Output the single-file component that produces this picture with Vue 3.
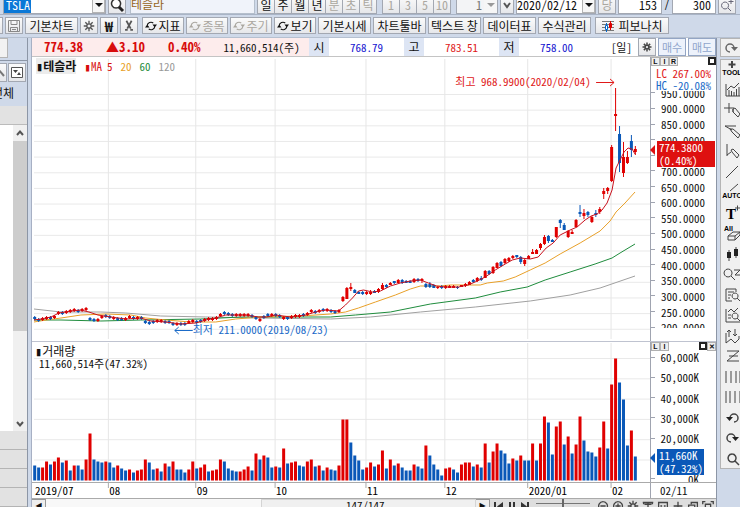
<script setup>
// Daily volume, one entry per bar: direction (r = up, b = down) and bar height
const volumeText =
  'b15 b13 r13 r19 b16 r19 r23 b18 r20 b10 r15 b15 b11 r21 r47 b21 b19 b18 r19 b18 ' +
  'b13 r15 b12 b10 r11 b8 r10 r11 r21 b18 b11 r12 b9 r17 b14 r19 b11 b11 b8 r11 ' +
  'r19 b12 r13 r16 b9 r10 r11 r21 b19 b12 b10 b9 r9 r11 r14 b10 r27 b21 r25 b23 ' +
  'b13 r14 b13 r32 b17 r18 r19 b15 b14 r19 r21 b14 r15 b10 r13 b11 b10 r15 r61 r61 ' +
  'b38 b25 b20 b11 r13 r18 b14 r16 r30 b12 r21 b15 r17 b13 b10 b10 r16 b14 b12 r35 ' +
  'b25 b16 b11 b5 r12 r13 b11 b8 r16 r18 r18 b14 r16 b13 r37 b18 r29 r37 b30 b27 ' +
  'b17 r22 b20 r25 b20 b20 r37 b20 r37 r64 b58 b26 r54 r59 b36 r44 b27 r36 r64 b40 ' +
  'b29 b28 b24 r33 r59 b32 r96 r122 b98 b81 b35 r50 b24'

// Quiet stretch: direction and body middle
const quietText =
  'b318 b320 r319 r318 b318 r317 r313 b313 r312 r311 r310 b311 r310 r309 b319 b320 r320 r317 b316 b317 ' +
  'r318 b319 b319 r319 r317 b318 r318 b318 b322 b323 b322 r321 r321 b322 b322 b324 r324 b324 b324 r322 ' +
  'r321 b322 b321 r320 r319 r319 r318 r315 b313 b314 b315 r315 r315 r315 r315 b316 b318 r320 b317 b315 ' +
  'r315 b315 b316 r318 b318 r317 r316 r316 b315 r314 r311 b312 r311 b310 r310 b311 b312 r311'

// Active stretch: direction, body top, body bottom, wick top, wick bottom
const activeText =
  'r,297,301,296,302|r,288,299,287,299|r,287,289,283,291|b,290,293,289,293|b,292,294,291,294|b,292,294,291,295|' +
  'r,292,294,291,295|r,292,294,290,295|b,291,293,290,293|r,289,292,288,293|r,285,289,283,290|b,285,287,284,288|' +
  'r,283,285,282,285|b,281,283,281,284|r,280,283,279,283|b,280,283,279,284|b,281,283,280,283|b,281,283,280,283|' +
  'r,279,282,278,283|b,279,281,278,282|r,279,281,278,283|b,284,287,283,288|b,284,287,282,288|b,285,288,284,288|' +
  'r,287,288,286,289|b,286,288,285,289|r,286,288,285,289|r,286,288,285,288|r,286,288,285,288|b,287,288,286,289|' +
  'r,285,287,285,287|r,284,286,283,287|r,282,285,281,285|b,280,282,279,283|r,278,281,277,282|b,278,280,276,281|' +
  'r,271,278,270,278|b,271,274,270,275|r,267,273,266,274|r,263,268,262,268|b,262,266,261,267|r,259,263,258,264|' +
  'r,258,261,257,262|r,256,258,255,259|b,255,257,255,258|b,257,262,256,264|r,260,264,259,266|r,256,259,255,259|' +
  'r,252,254,249,254|r,250,254,249,254|r,244,248,243,250|r,237,244,235,245|b,236,241,235,243|b,240,242,239,242|' +
  'r,227,237,227,238|b,220,223,219,228|b,225,230,223,230|r,231,237,230,238|r,232,234,230,234|r,220,227,219,227|' +
  'b,212,214,205,217|r,213,216,209,219|b,212,215,211,217|r,217,222,216,223|b,213,215,210,217|r,209,212,207,214|' +
  'r,191,194,188,199|r,188,191,187,194|r,147,181,145,182|r,114,116,88,131|b,134,163,126,172|r,157,173,142,177|' +
  'r,157,163,151,164|b,141,150,135,157|r,149,152,146,155'

const barX = (i) => 33.7 + i * 3.958

const volumes = volumeText.split(' ').map((t, i) => ({ dir: t[0], x: barX(i), h: Number(t.slice(1)) }))
const quiet = quietText.split(' ').map((t) => {
  const y = Number(t.slice(1))
  return { dir: t[0], top: y - 1, bottom: y + 1, high: y - 2, low: y + 2 }
})
const active = activeText.split('|').map((t) => {
  const [dir, ...n] = t.split(',')
  const [top, bottom, high, low] = n.map(Number)
  return { dir, top, bottom, high, low }
})
const candles = [...quiet, ...active].map((c, i) => ({ ...c, x: barX(i) }))

const averages = [
  { name: 'ma120', pts: '33,309 60,312 100,312 125,313 160,316 205,317 260,318 330,319 370,317 420,312 475,307 530,301 570,295 600,288 635,276' },
  { name: 'ma60', pts: '33,320 60,320 100,321 140,320 200,319 240,317 300,317 330,317 355,315 390,312 430,304 475,298 500,292 527,287 545,280 570,272 595,264 612,258 620,253 635,244' },
  { name: 'ma20', pts: '33,322 45,320 60,318 80,315 105,314 130,315 145,318 165,320 190,322 215,322 235,319 260,317 300,316 330,314 345,312 358,308 375,302 395,295 410,289 420,286 440,286 450,285 480,285 487,283 503,281 515,277 530,270 545,263 560,254 580,243 600,231 610,221 616,212 625,203 635,192' },
  { name: 'ma5', pts: '33,320 40,319 50,317 58,313 70,311 80,310 88,312 97,315 110,317 125,319 140,318 150,321 165,322 180,324 195,323 205,320 215,318 225,315 245,315 258,317 266,317 275,315 290,317 305,315 315,312 325,310 338,311 345,305 352,298 358,291 363,290 372,292 380,291 390,286 400,283 410,281 420,280 428,283 436,286 445,287 458,287 468,285 477,281 485,277 495,270 505,264 512,260 520,258 530,259 538,257 546,248 553,243 560,235 570,230 577,227 585,220 591,216 597,214 602,210 607,203 612,190 616,168 620,160 624,152 628,148 632,149 635,154' },
]

const months = [
  { x: 107.5, label: '08' }, { x: 195, label: '09' }, { x: 274.5, label: '10' },
  { x: 365.5, label: '11' }, { x: 444.5, label: '12' }, { x: 527.5, label: '2020/01' }, { x: 611, label: '02' },
]
const priceGrid = Array.from({ length: 16 }, (_, i) => 94.5 + i * 15.65)
const volumeGrid = Array.from({ length: 6 }, (_, i) => 358.5 + i * 20.3)
// The row behind the current-value tag carries a tick only
const prices = Array.from({ length: 16 }, (_, i) => (i === 4 ? '' : (950 - i * 50).toFixed(4)))
const volumeLabels = ['60,000K', '50,000K', '40,000K', '30,000K', '20,000K', '', '0K']

const periods = [
  { t: '일', on: true }, { t: '주', on: true }, { t: '월', on: true }, { t: '년', on: true },
  { t: '분' }, { t: '초' }, { t: '틱' },
]
const syncButtons = [{ t: '지표', on: true }, { t: '종목' }, { t: '주기' }, { t: '보기', on: true }]
const wideButtons = ['기본시세', '차트툴바', '텍스트 창', '데이터표', '수식관리']

const gear = 'M8 5.5a2.5 2.5 0 1 0 0 5a2.5 2.5 0 1 0 0-5M8 2v3M8 11v3M2 8h3M11 8h3M3.8 3.8l2 2M10.2 10.2l2 2M3.8 12.2l2-2M10.2 5.8l2-2'
const sync = 'M3 7a5 4.500 0 0 1 8-3M13 9a5 4.500 0 0 1-8 3'
const syncHeads = 'M10 6h6l-3 4zM6 10H0l3-4z'

// Drawing tools on the right rail, 20 × 18 boxes
const tools = [
  { n: 'TOOL', d: 'M10 1v7M6.500 4.500h7', w: 2, t: 'TOOL', ty: 15 },
  { n: '차트', d: 'M4 3v12h14M5 9l4-4 3 2 5-5M7 15V9M9.500 15v-5M12 15v-4M14.500 15V8M17 15V6' },
  { n: '십자선', d: 'M2 7h10M7 2v10M11 8l2-1 5 6-2 3-5-5zM11 8v3' },
  { n: '수평선', d: 'M3 4h11M8 7l3 0 7 6-2 3-6-6zM3 4l7 4' },
  { n: '수직선', d: 'M5 2v12M9 8l2-1 6 6-2 3-5-6zM5 13l4-3' },
  { n: '추세선', d: 'M4 15L16 3' },
  { n: '자동 추세선', d: 'M8 8L16 1', t: 'AUTO', ty: 15 },
  { n: '텍스트', d: 'M13 4h5M15.500 1.500v5', serif: 'T' },
  { n: '전체 삭제', d: 'M6 12l5-4h7v3l-5 5H6zM6 12h7v4M13 12l5-4', all: 'All' },
  { n: '봉 차트', d: 'M7 5v11M14 2v11', f: 'M5 7h4v6H5zM12 4h4v7h-4z' },
  { n: '확대 목록', d: 'M6 4a4 4 0 1 0 .1 0M9 11l4 4M12 5h6l-5 5h5' },
  { n: '문서 조회', d: 'M14 6V3H4v12h6M6 6h6M6 9h3M6 12h2M13 7a3 3 0 1 0 .1 0M15 12l4 4' },
  { n: '차트 조회', d: 'M4 3v13h14M6 6l3-3 3 3 4-4M6 9h3M6 12h3M13 7a3 3 0 1 0 .1 0M15 12l3 3' },
  { n: '신호', d: 'M4 6v10l5-4 4 4 4-4V9M7 3v7M5 5l2-2 2 2M13 2v7M11 7l2 2 2-2' },
  { n: '패턴', d: 'M5 4h12L5 14h12M7 9h9' },
  { n: '시간대', d: 'M4 3v12M9 3v12M14 3v12M18 3v12' },
  { n: '피보나치 시간대', d: 'M4 3v12M8 3v12M13 3v12M18 3v12' },
  { n: '되돌리기', d: 'M8 9a4 4 0 1 1 4 4', w: 1.5, f: 'M4 8h7l-3.500 4z' },
  { n: '다시 실행', d: 'M13 9a4 4 0 1 0-4 4', w: 1.5, f: 'M10 8h7l-3.500 4z' },
  { n: '돋보기', d: 'M10 4a4 4 0 1 0 .1 0M13 11l4 4', w: 1.5 },
]
const footIcons = [
  { n: '축소', d: 'M8 3a5 5 0 1 0 .1 0M5 8h6' },
  { n: '확대', d: 'M8 3a5 5 0 1 0 .1 0M5 8h6M8 5v6' },
  { n: '설정', d: gear },
  { n: '도구', d: 'M2 4h12M4 6h8M8 4v8M3 3v3M13 3v3' },
  { n: '창', d: 'M3 4h10v8H3zM5 8h2M9 8h2' },
  { n: '이동', d: 'M8 3v10M3 8h10' },
  { n: '겹치기', d: 'M3 7h7v6H3zM6 6V4h7v6h-3' },
  { n: '전체 화면', d: 'M5 6h6v5H5zM2 6V3h3M11 3h3v3' },
]
</script>

<template>
  <div class="app">
    <header class="row symbol-row">
      <div class="combo symbol">
        <input class="field" aria-label="종목코드" value="TSLA" />
        <button class="arrow" aria-label="종목 목록"><i class="down"></i></button>
      </div>
      <button class="btn icon" aria-label="종목 검색">
        <svg viewBox="0 0 16 16" width="16" height="16"><path d="M7 2a4.500 4.500 0 1 0 .1 0" fill="#fff" stroke="#333" stroke-width="1.500" /><path d="M10 10l4 4" stroke="#222" stroke-width="3" /></svg>
      </button>
      <div class="stock-name">테슬라</div>
      <div class="segments">
        <button v-for="p in periods" :key="p.t" class="btn seg" :class="{ off: !p.on }">{{ p.t }}</button>
      </div>
      <div class="segments counts">
        <button v-for="n in [1, 3, 5, 10]" :key="n" class="btn seg off">{{ n }}</button>
      </div>
      <div class="combo count">
        <input class="field muted" aria-label="간격" value="1" />
        <button class="arrow plain" aria-label="간격 선택"><i class="down grey"></i></button>
      </div>
      <button class="btn chev" aria-label="더 보기"><svg viewBox="0 0 10 10" width="10" height="10"><path d="M2 3l3 4 3-4" fill="none" stroke="#555" stroke-width="2" /></svg></button>
      <div class="combo date">
        <input class="field" aria-label="날짜" value="2020/02/12" />
        <button class="arrow" aria-label="날짜 선택"><i class="down"></i></button>
      </div>
      <button class="btn icon off">당</button>
      <input class="field box" aria-label="표시 개수" value="153" />
      <span class="slash">/</span>
      <input class="field box" aria-label="전체 개수" value="300" />
      <button class="btn icon" aria-label="확대">
        <svg viewBox="0 0 16 16" width="16" height="16" fill="none" stroke="#667"><path d="M6 5a3.500 3.500 0 1 0 .1 0M9 11l3 3M12 2v5M9.500 4.500h5" /></svg>
      </button>
    </header>

    <nav class="row tool-row">
      <button class="btn edge" aria-label="메뉴"></button>
      <button class="btn icon" aria-label="저장">
        <svg viewBox="0 0 16 16" width="16" height="16" fill="none" stroke="#888"><path d="M2.500 2.500h11v11h-11zM5 2.500v4h6v-4M4.500 13.500v-4h7v4M6 11.500h4" /></svg>
      </button>
      <button class="btn wide">기본차트</button>
      <button class="btn icon" aria-label="설정"><svg viewBox="0 0 16 16" width="14" height="14" fill="none" stroke="#555" stroke-width="1.500"><path :d="gear" /></svg></button>
      <button class="btn icon won">₩</button>
      <button class="btn icon" aria-label="자르기">
        <svg viewBox="0 0 16 16" width="14" height="14" fill="none" stroke="#555" stroke-width="2"><path d="M5 2l5 9M11 2L6 11" /><path d="M5 11.500v2M11 11.500v2" stroke-width="3" /></svg>
      </button>
      <div class="sync-group">
        <button v-for="b in syncButtons" :key="b.t" class="btn sync" :class="{ off: !b.on }">
          <svg viewBox="0 0 16 16" width="12" height="12"><path :d="sync" fill="none" stroke="currentColor" stroke-width="1.500" /><path :d="syncHeads" fill="currentColor" /></svg>{{ b.t }}
        </button>
      </div>
      <button v-for="b in wideButtons" :key="b" class="btn wide">{{ b }}</button>
      <button class="btn fibo">
        <svg viewBox="0 0 14 12" width="14" height="12"><path d="M1 1.500h12M1 4.500h12M1 7.500h12M1 10.500h12" stroke="#777" /><path d="M5.500 3v9" stroke="#06c" /><path d="M9.500 1v9" stroke="#d00" /><path d="M4.500 5.500h2v4h-2z" fill="#fff" stroke="#06c" /><path d="M8.500 3.500h2v4h-2z" fill="#d00" stroke="#d00" /></svg>피보나치
      </button>
    </nav>

    <div class="body">
      <aside class="side">
        <div class="side-tab"></div>
        <div class="side-head">
          <div class="side-buttons">
            <button class="btn side-find" aria-label="찾기"><svg viewBox="0 0 8 16" width="8" height="16"><path d="M0 5l5 6" stroke="#777" stroke-width="2" /></svg></button>
            <button class="btn side-view" aria-label="보기 변경"><svg viewBox="0 0 14 14" width="14" height="14"><path d="M1.500 1.500h11v10h-11z" fill="#fff" stroke="#555" /><path d="M3 4h5L5.500 7zM7 9h4L9 6z" fill="#444" /></svg></button>
          </div>
          <div class="side-all"><span>전체</span></div>
        </div>
        <div class="side-band"></div>
        <div class="side-list">
          <div class="scroll">
            <svg viewBox="0 0 14 16" width="14" height="16"><path d="M4 10l3-3.500 3 3.500" fill="none" stroke="#555" stroke-width="2" /></svg>
            <div class="thumb"></div>
            <svg viewBox="0 0 14 16" width="14" height="16"><path d="M4 7l3 3.500 3-3.500" fill="none" stroke="#555" stroke-width="2" /></svg>
          </div>
        </div>
        <div v-for="n in 4" :key="n" class="side-row"></div>
      </aside>

      <main class="chart">
        <section class="quote">
          <div class="now">
            <b>774.38</b><b>▲3.10</b><b>0.40%</b><span>11,660,514(주)</span>
          </div>
          <span class="lab">시</span><span class="val blue">768.79</span>
          <span class="lab">고</span><span class="val red">783.51</span>
          <span class="lab">저</span><span class="val blue">758.00</span>
          <span class="day">[일]</span>
          <button class="btn icon" aria-label="시세 설정"><svg viewBox="0 0 16 16" width="12" height="12" fill="none" stroke="#444" stroke-width="2"><path :d="gear" /></svg></button>
          <button class="btn trade">매수</button>
          <button class="btn trade">매도</button>
        </section>

        <section class="pane">
          <div class="plot">
            <svg class="price-svg" viewBox="31 57 619 284" preserveAspectRatio="none">
              <path v-for="y in priceGrid" :key="y" :d="`M33 ${y}H650`" stroke="#e9e9e9" />
              <path v-for="m in months" :key="m.x" :d="`M${m.x} 59V339`" stroke="#e6e6e6" />
              <polyline v-for="a in averages.slice(0, 3)" :key="a.name" :points="a.pts" :class="a.name" class="avg" />
              <g v-for="c in candles" :key="c.x" :class="c.dir">
                <rect :x="c.x - 0.5" :y="c.high" width="1" :height="c.low - c.high" />
                <rect :x="c.x - 1.5" :y="c.top" width="3" :height="c.bottom - c.top" />
              </g>
              <polyline :points="averages[3].pts" class="avg ma5" />
              <text x="455" y="86" fill="#e01818">최고 968.9900(2020/02/04)</text>
              <path d="M596 82.500h18M610 79l4 3.500-4 3.500" fill="none" stroke="#e01818" />
              <text x="192" y="334" fill="#1a6ac8">최저 211.0000(2019/08/23)</text>
              <path d="M192 330.500h-18M178 327l-4 3.500 4 3.500" fill="none" stroke="#1a6ac8" />
            </svg>
            <div class="legend">
              <b class="title">▮테슬라</b>
              <span class="t5">▮MA</span><span class="t5">5</span><span class="t20">20</span><span class="t60">60</span><span class="t120">120</span>
            </div>
          </div>
          <div class="axis">
            <div class="axis-head"><i>L</i><i>I</i><i>R</i><i class="sq"></i></div>
            <div class="rate up">LC 267.00%</div>
            <div class="rate dn">HC -20.08%</div>
            <div class="clip price-clip"><ul class="ticks prices"><li v-for="(p, i) in prices" :key="i">{{ p }}</li></ul></div>
            <div class="tag price-tag">774.3800<br />(0.40%)</div>
          </div>
        </section>

        <section class="pane volume">
          <div class="plot">
            <svg class="volume-svg" viewBox="31 342 619 140" preserveAspectRatio="none">
              <path v-for="y in volumeGrid" :key="y" :d="`M33 ${y}H650`" stroke="#e9e9e9" />
              <path v-for="m in months" :key="m.x" :d="`M${m.x} 343V482`" stroke="#e6e6e6" />
              <rect v-for="v in volumes" :key="v.x" :class="v.dir" :x="v.x - 1.5" :y="480.5 - v.h" width="3" :height="v.h" />
            </svg>
            <div class="legend stacked"><span class="name">▮거래량</span><span>11,660,514주(47.32%)</span></div>
          </div>
          <div class="axis">
            <div class="axis-head"><i>L</i><i>I</i><i class="sq"></i><i class="x">✕</i></div>
            <div class="clip"><ul class="ticks vols"><li v-for="(v, i) in volumeLabels" :key="i">{{ v }}</li></ul></div>
            <div class="tag volume-tag">11,660K<br />(47.32%)</div>
          </div>
        </section>

        <section class="pane dates">
          <div class="plot">
            <svg class="date-svg" viewBox="31 482 619 15" preserveAspectRatio="none">
              <text x="34" y="494">2019/07</text>
              <g v-for="m in months" :key="m.x">
                <path :d="`M${m.x} 482v5`" stroke="#aaa" />
                <text :x="m.x + 1" y="494">{{ m.label }}</text>
              </g>
            </svg>
          </div>
          <div class="axis last-date">02/11</div>
        </section>

        <footer class="foot">
          <button class="foot-btn" aria-label="왼쪽으로">◀</button>
          <div class="track"><div class="handle"></div><span>147/147</span></div>
          <button class="foot-btn" aria-label="오른쪽으로">▶</button>
          <svg viewBox="0 0 40 14" width="40" height="14" fill="#333"><path d="M4 3h2v9H4zM13 3v9L7 7.500zM19 3h2v9h-2zM23 3h2v9h-2zM31 3v9l6-4.500zM37 3h2v9h-2z" /></svg>
          <input class="range" type="range" aria-label="확대 비율" />
          <button v-for="f in footIcons" :key="f.n" class="foot-icon" :aria-label="f.n">
            <svg viewBox="0 0 16 16" width="14" height="14" fill="none" stroke="#444" stroke-width="1.500"><path :d="f.d" /></svg>
          </button>
        </footer>
      </main>

      <aside class="rail">
        <button class="rail-top" aria-label="새로 고침"><svg viewBox="0 0 20 18" width="20" height="18"><path d="M13 9a4 4 0 1 0-4 4" fill="none" stroke="#666" stroke-width="1.500" /><path d="M10 8h7l-3.500 4z" fill="#666" /></svg></button>
        <div class="rail-list">
          <button v-for="t in tools" :key="t.n" class="tool" :aria-label="t.n">
            <svg viewBox="0 0 20 18" width="20" height="18">
              <path :d="t.d" fill="none" stroke="#444" :stroke-width="t.w || 1" />
              <path v-if="t.f" :d="t.f" fill="#222" />
              <text v-if="t.t" x="10" :y="t.ty" class="tiny" text-anchor="middle">{{ t.t }}</text>
              <text v-if="t.serif" x="4" y="15" class="serif">{{ t.serif }}</text>
              <text v-if="t.all" x="2" y="7" class="tiny">{{ t.all }}</text>
            </svg>
          </button>
        </div>
      </aside>
    </div>
  </div>
</template>

<style>
body {
  margin: 0;
  background: #cfd9e9;
}
</style>

<style scoped>
.app {
  --mono: "Noto Sans Mono CJK KR", "Noto Sans CJK KR", "Liberation Mono", monospace;
  height: 100vh;
  overflow: hidden;
  display: flex;
  flex-direction: column;
  background: #cfd9e9;
  color: #111;
  font: 12px/16px "Noto Sans CJK KR", sans-serif;
}
.app * { box-sizing: border-box; }
svg { display: block; flex: none; }
button, input { font: inherit; color: inherit; margin: 0; padding: 0; }
.row { display: flex; flex: none; white-space: nowrap; }
.btn {
  flex: none;
  display: flex;
  align-items: center;
  justify-content: center;
  border: 1px solid #a3a8b2;
  background: linear-gradient(#fbfbfb, #e6e7ea);
  overflow: hidden;
}
.off { color: #aaa7a0; }
.icon { width: 18px; }

.symbol-row {
  height: 15px;
  align-items: flex-end;
  overflow: hidden;
  gap: 2px;
  padding-left: 3px;
  border-bottom: 1px solid #a9b4c6;
}
.symbol-row > * { height: 19px; flex: none; }
.combo { display: flex; border: 1px solid #a3a8b2; background: #fff; }
.field { min-width: 0; width: 100%; border: 0; outline: 0; background: #fff; font-family: var(--mono); }
.arrow { flex: none; width: 13px; border: 1px solid #b4b4b4; background: #f6f6f6; display: flex; align-items: center; justify-content: center; }
.arrow.plain { border: 0; }
.down { border: 4px solid transparent; border-top-color: #111; border-bottom: 0; }
.down.grey { border-top-color: #999; }
.symbol { width: 103px; }
.symbol .field { flex: none; width: 27px; margin-right: auto; background: #0a78d7; color: #fff; padding-left: 2px; }
.stock-name { width: 125px; margin-left: 2px; border: 1px solid #b5bfcc; background: #f0f3fa; color: #956320; font-size: 12px; }
.segments { display: flex; }
.seg { width: 18px; margin-right: -1px; }
.counts { margin-left: 4px; }
.counts .seg { width: 18px; font-family: var(--mono); }
.count { width: 42px; margin-left: 4px; }
.muted { text-align: right; color: #777; background: #f3f4f6; padding-right: 2px; }
.chev { width: 14px; }
.date { width: 80px; }
.box { width: 44px; border: 1px solid #a3a8b2; text-align: right; padding-right: 4px; }
.slash { width: 6px; text-align: center; }

.tool-row { gap: 2px; padding: 2px 0 3px; height: 23px; border-bottom: 1px solid #b5c0d0; }
.edge { width: 3px; border-left: 0; }
.wide { width: 53px; }
.won { font-weight: 700; font-size: 14px; }
.sync-group { display: flex; gap: 2px; margin-left: 2px; }
.sync { width: 42px; gap: 1px; }
.fibo { width: 74px; gap: 3px; margin-left: 2px; }

.body { flex: 1; min-height: 0; display: flex; }
.side { width: 28px; flex: none; display: flex; flex-direction: column; border-right: 1px solid #8c96a6; margin-right: 3px; }
.side-tab { width: 8px; height: 20px; border: 1px solid #b4b4b4; border-left: 0; background: #f2f2f2; margin-bottom: 2px; flex: none; }
.side-head { height: 46px; flex: none; border-top: 1px solid #8c96a6; padding-top: 2px; }
.side-buttons { display: flex; height: 19px; gap: 1px; }
.side-find { width: 7px; border-left: 0; }
.side-view { width: 18px; }
.side-all { width: 14px; display: flex; justify-content: flex-end; overflow: hidden; padding-top: 3px; white-space: nowrap; }
.side-band { height: 19px; flex: none; background: #e2e2e2; border-bottom: 1px solid #bbb; }
.side-list { flex: 1; min-height: 0; background: #fff; display: flex; justify-content: flex-end; }
.scroll { width: 14px; background: #f0f0f0; display: flex; flex-direction: column; }
.thumb { height: 190px; background: #cdcdcd; margin-bottom: auto; }
.side-row { height: 19px; flex: none; background: #e2e2e2; border-bottom: 1px solid #b4b4b4; }

.chart { flex: 1; min-width: 0; display: flex; flex-direction: column; background: #fff; border-left: 1px solid #a7b0c4; border-right: 1px solid #8c96a6; }
.quote { display: flex; align-items: stretch; height: 19px; flex: none; line-height: 18px; border-bottom: 1px solid #c4c4c4; font-family: var(--mono); font-size: 11px; white-space: nowrap; }
.now { width: 277px; display: flex; background: #fdecec; padding-left: 12px; gap: 23px; }
.now b { color: #d80c0c; font-size: 13px; }
.lab { width: 20px; text-align: center; background: #dde5f4; font-size: 12px; }
.val { flex: 1; text-align: center; }
.blue { color: #1414d0; }
.red { color: #e01818; }
.day { width: 44px; text-align: right; padding-right: 6px; }
.quote .btn { height: 18px; line-height: 14px; }
.quote .trade { width: 28px; margin-left: 2px; color: #8fa5cc; background: #edf2fb; border-color: #93a5c4; }

.pane { display: flex; flex: none; }
.plot { flex: 1; min-width: 0; position: relative; }
.plot svg { width: 100%; font-family: var(--mono); font-size: 11px; }
.price-svg { height: 284px; }
.volume-svg { height: 140px; }
.date-svg { height: 15px; }
.volume { border-top: 1px solid #bfc3d0; }
.dates { border-top: 1px solid #aaa; border-bottom: 1px solid #aaa; }
.r { fill: #e00000; }
.b { fill: #0a58b8; }
.avg { fill: none; }
.ma5 { stroke: #c8101c; }
.ma20 { stroke: #e8a028; }
.ma60 { stroke: #1e8c3c; }
.ma120 { stroke: #a0a0a0; }
.legend { position: absolute; top: 1px; left: 4px; display: flex; gap: 8px; font: 11px/16px var(--mono); white-space: nowrap; }
.legend .title { background: #ececec; font-size: 12px; }
.legend .t5 + .t5 { margin-left: -3px; }
.t5 { color: #d80c0c; }
.t20 { color: #e8a028; }
.t60 { color: #1e8c3c; }
.t120 { color: #999; }
.stacked { flex-direction: column; gap: 0; line-height: 13px; top: 2px; left: 3px; }
.stacked .name { font-size: 12px; }
.stacked span + span { padding-left: 4px; }

.axis { width: 66px; flex: none; position: relative; border-left: 1px solid #a0a4b0; display: flex; flex-direction: column; font: 11px/12px var(--mono); }
.axis-head { display: flex; height: 10px; flex: none; }
.axis-head i { width: 9px; height: 9px; border: 1px solid #b0b0b0; background: #eee; font: bold 7px/7px "Liberation Sans", sans-serif; text-align: center; }
.axis-head .sq { margin-left: auto; border: 2px solid #222; width: 8px; height: 8px; background: #fff; }
.rate { flex: none; padding-left: 5px; }
.up { color: #e01818; }
.dn { color: #1a6ac8; }
.clip { flex: 1; min-height: 0; overflow: hidden; contain: size; }
.price-clip { margin-bottom: 13px; }
.ticks { list-style: none; margin: 0; padding: 0; display: grid; grid-auto-rows: 1fr; }
.ticks li { display: flex; align-items: center; width: 54px; justify-content: flex-end; }
.ticks li::before { content: ""; width: 4px; border-top: 1px solid #a0a4b0; margin-right: auto; }
.prices { height: 250px; margin-top: -6px; }
.vols { height: 142px; margin-top: -5px; }
.vols li { width: 48px; }
.tag { position: absolute; left: 6px; color: #fff; line-height: 13px; padding-left: 2px; }
.tag::before { content: ""; position: absolute; left: -7px; top: 4px; border: 5px solid transparent; border-right-color: inherit; border-left: 0; }
.price-tag { top: 84px; width: 58px; background: #de1010; border-color: #de1010; }
.volume-tag { top: 107px; width: 47px; background: #0a58b8; border-color: #0a58b8; }
.last-date { padding-left: 9px; line-height: 15px; }

.foot { display: flex; flex: none; height: 14px; background: #dedede; font: 11px/14px var(--mono); overflow: hidden; align-items: flex-start; }
.foot-btn { width: 14px; height: 14px; flex: none; border: 1px solid #999; border-left: 0; background: #eee; font: 8px/12px "DejaVu Sans", sans-serif; }
.track { flex: 1; height: 14px; background: #f8f8f8; position: relative; display: flex; justify-content: flex-end; }
.track span { position: absolute; left: 300px; line-height: 12px; }
.handle { width: 50%; background: #f0f0f0; border: 1px solid #d4d4d4; }
.range { appearance: none; width: 54px; height: 1px; margin: 4px 6px; flex: none; background: #777; }
.range::-webkit-slider-thumb { appearance: none; width: 2px; height: 10px; background: #666; }
.foot-icon { width: 15px; height: 14px; border: 0; background: none; flex: none; }

.rail { width: 20px; flex: none; margin-left: 3px; overflow: hidden; }
.rail-top { display: block; width: 26px; height: 19px; border: 1px solid #b4b4b4; background: #f0f0f0; }
.rail-list { width: 26px; height: 410px; margin-top: 2px; border: 1px solid #b4b4b4; background: #f0f0f0; display: flex; flex-direction: column; justify-content: space-between; }
.tool { display: block; height: 18px; width: 20px; padding: 0 0 0 1px; border: 0; background: none; }
.tool svg { overflow: visible; }
.tiny { font: bold 7px "Liberation Sans", sans-serif; }
.serif { font: bold 15px "Liberation Serif", serif; }
</style>
